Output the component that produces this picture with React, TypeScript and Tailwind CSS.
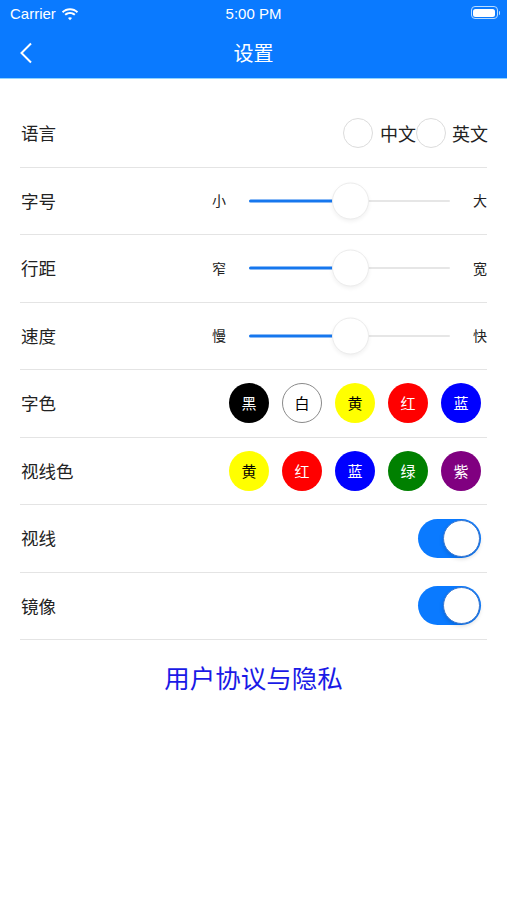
import React from "react";

const cjk = { fontFamily: '"Noto Sans CJK SC", "Noto Sans", sans-serif' };

function Slider({ left, right }: { left: string; right: string }) {
  return (
    <div className="flex items-center">
      <span className="text-[14px] text-[#222]">{left}</span>
      <div className="relative ml-[23px] mr-[23px] h-[40px] w-[201px] flex items-center">
        <div className="h-[2px] w-full bg-[#e6e6e6] rounded-full" />
        <div className="absolute left-0 top-1/2 -translate-y-1/2 h-[3px] w-[85px] bg-[#1677ee] rounded-full" />
        <div className="absolute left-[83px] top-1/2 -translate-y-1/2 h-[37px] w-[37px] rounded-full bg-white border border-[#ececec] shadow-[0_2px_4px_rgba(0,0,0,0.06)]" />
      </div>
      <span className="text-[14px] text-[#222]">{right}</span>
    </div>
  );
}

function Dot({ bg, fg, label, border }: { bg: string; fg: string; label: string; border?: boolean }) {
  return (
    <div
      className={`h-[40px] w-[40px] rounded-full flex items-center justify-center text-[15px] ${border ? "border border-[#8a8a8a]" : ""}`}
      style={{ backgroundColor: bg, color: fg }}
    >
      {label}
    </div>
  );
}

function Toggle() {
  return (
    <div className="h-[39px] w-[63px] rounded-full bg-[#0a7aff] flex items-center justify-end pr-[1px]">
      <div className="h-[37px] w-[37px] rounded-full bg-white border border-[#3a78d0] shadow-[0_2px_4px_rgba(0,0,0,0.15)]" />
    </div>
  );
}

function Row({ label, children }: { label: string; children: React.ReactNode }) {
  return (
    <div className="h-[67.5px] border-b border-[#e4e4e4] flex items-center justify-between">
      <span className="text-[17.5px] text-[#222] pl-[1px]">{label}</span>
      {children}
    </div>
  );
}

export default function App() {
  return (
    <div className="w-[507px] h-[900px] bg-white" style={cjk}>
      <div className="bg-[#0a7aff] border-b border-[#8fd3ff]">
        <div className="h-[28px] relative flex items-center text-white" style={{ fontFamily: '"Liberation Sans", Arial, sans-serif' }}>
          <div className="flex items-center pl-[10px] gap-[5px]">
            <span className="text-[15px]">Carrier</span>
            <svg width="18" height="13" viewBox="0 0 18 13" fill="white">
              <path d="M9 2.2c2.6 0 5 1 6.8 2.7l1.3-1.4C14.9 1.4 12.1.2 9 .2S3.1 1.4.9 3.5l1.3 1.4C4 3.2 6.4 2.2 9 2.2z" />
              <path d="M9 5.9c1.6 0 3 .6 4.2 1.6l1.3-1.4C13 4.7 11.1 3.9 9 3.9S5 4.7 3.5 6.1l1.3 1.4C6 6.5 7.4 5.9 9 5.9z" />
              <path d="M9 9.3c.8 0 1.5.3 2 .8L9 12.3 7 10.1c.5-.5 1.2-.8 2-.8z" />
            </svg>
          </div>
          <span className="absolute left-1/2 -translate-x-1/2 text-[15px] font-medium">5:00 PM</span>
          <div className="absolute right-[7px] top-[6px] flex items-center">
            <div className="h-[13px] w-[27px] rounded-[4px] border border-[#b8dcff] p-[1.5px]">
              <div className="h-full w-full rounded-[2.5px] bg-white" />
            </div>
            <div className="h-[4px] w-[1.5px] bg-[#b8dcff] rounded-r-sm ml-[1px]" />
          </div>
        </div>
        <div className="h-[50px] relative flex items-center justify-center">
          <svg className="absolute left-[19px] top-[14px]" width="14" height="22" viewBox="0 0 14 22" fill="none" stroke="white" strokeWidth="2">
            <path d="M12 1.5 2.5 11 12 20.5" />
          </svg>
          <span className="text-[20px] text-white">设置</span>
        </div>
      </div>

      <div className="px-5 pt-[21px]">
        <Row label="语言">
          <div className="flex items-center text-[18px] text-[#222] -mr-[1px]">
            <div className="h-[30px] w-[30px] rounded-full border border-[#dcdcdc]" />
            <span className="ml-[7px]">中文</span>
            <div className="h-[30px] w-[30px] rounded-full border border-[#dcdcdc]" />
            <span className="ml-[6px]">英文</span>
          </div>
        </Row>
        <Row label="字号">
          <Slider left="小" right="大" />
        </Row>
        <Row label="行距">
          <Slider left="窄" right="宽" />
        </Row>
        <Row label="速度">
          <Slider left="慢" right="快" />
        </Row>
        <Row label="字色">
          <div className="flex items-center gap-[13px] pr-[6px]">
            <Dot bg="#000000" fg="#ffffff" label="黑" />
            <Dot bg="#ffffff" fg="#000000" label="白" border />
            <Dot bg="#ffff00" fg="#000000" label="黄" />
            <Dot bg="#ff0000" fg="#ffffff" label="红" />
            <Dot bg="#0000ff" fg="#ffffff" label="蓝" />
          </div>
        </Row>
        <Row label="视线色">
          <div className="flex items-center gap-[13px] pr-[6px]">
            <Dot bg="#ffff00" fg="#000000" label="黄" />
            <Dot bg="#ff0000" fg="#ffffff" label="红" />
            <Dot bg="#0000ff" fg="#ffffff" label="蓝" />
            <Dot bg="#008000" fg="#ffffff" label="绿" />
            <Dot bg="#800080" fg="#ffffff" label="紫" />
          </div>
        </Row>
        <Row label="视线">
          <div className="pr-[6px]">
            <Toggle />
          </div>
        </Row>
        <Row label="镜像">
          <div className="pr-[6px]">
            <Toggle />
          </div>
        </Row>
        <div className="mt-[21px] flex justify-center">
          <span className="text-[25.5px] leading-[32px] text-[#1a1ae6]">用户协议与隐私</span>
        </div>
      </div>
    </div>
  );
}
